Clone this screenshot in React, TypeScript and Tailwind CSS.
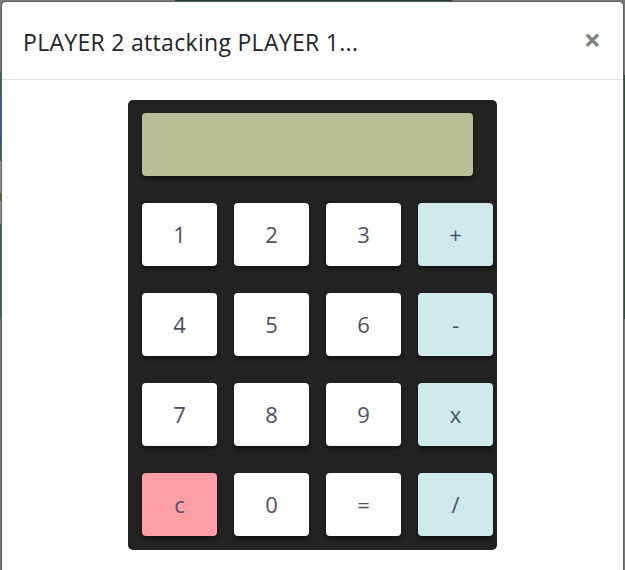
import React from "react";

const keys: { label: string; kind: "num" | "op" | "clear" }[] = [
  { label: "1", kind: "num" },
  { label: "2", kind: "num" },
  { label: "3", kind: "num" },
  { label: "+", kind: "op" },
  { label: "4", kind: "num" },
  { label: "5", kind: "num" },
  { label: "6", kind: "num" },
  { label: "-", kind: "op" },
  { label: "7", kind: "num" },
  { label: "8", kind: "num" },
  { label: "9", kind: "num" },
  { label: "x", kind: "op" },
  { label: "c", kind: "clear" },
  { label: "0", kind: "num" },
  { label: "=", kind: "num" },
  { label: "/", kind: "op" },
];

function Key({ label, kind }: { label: string; kind: "num" | "op" | "clear" }) {
  const bg =
    kind === "op" ? "bg-[#d0e9ea]" : kind === "clear" ? "bg-[#ff9ea6]" : "bg-white";
  return (
    <div
      className={`${bg} h-[63px] w-[75px] rounded-[4px] flex items-center justify-center text-[22px] text-[#4a5165] shadow-[0_3px_4px_rgba(0,0,0,0.45)]`}
    >
      {label}
    </div>
  );
}

export default function App() {
  return (
    <div
      className="w-[625px] h-[570px] overflow-hidden bg-[#7a7a7a] flex flex-col"
      style={{ fontFamily: '"Open Sans", "Noto Sans", sans-serif' }}
    >
      {/* top strip of page behind the backdrop */}
      <div className="h-px flex shrink-0">
        <div className="w-[175px]" />
        <div className="w-[277px] bg-[#17462b]" />
        <div className="flex-1" />
      </div>
      <div className="flex flex-1 min-h-0">
        {/* left strip */}
        <div className="w-px flex flex-col shrink-0">
          <div className="h-[71px]" />
          <div className="h-[22px] bg-[#2b6b45]" />
          <div className="h-[49px] bg-[#1c57b8]" />
          <div className="h-[18px] bg-[#2b6b45]" />
          <div className="h-[32px] bg-[#9d9580]" />
          <div className="h-[8px] bg-[#7a5a14]" />
          <div className="h-[23px] bg-[#9d9580]" />
          <div className="h-[95px] bg-[#2b6b45]" />
          <div className="flex-1" />
        </div>
        {/* modal */}
        <div className="w-[623px] shrink-0 bg-white rounded-t-[5px] border border-[#5f5f5f] border-b-0 flex flex-col">
          <div className="h-[78px] shrink-0 flex items-center justify-between pl-[21px] pr-[22px] border-b border-[#dee2e6]">
            <div className="text-[23px] leading-[30px] text-[#212529] pt-[2px] tracking-[0.3px]">
              PLAYER 2 attacking PLAYER 1...
            </div>
            <div className="text-[30px] font-bold leading-none text-[#808080] pb-[1px]">×</div>
          </div>
          <div className="flex justify-center pt-[20px]">
            <div className="w-[369px] bg-[#222222] rounded-[5px] pt-[13px] pl-[14px] pr-[4px] pb-[14px] flex flex-col gap-[27px]">
              <div className="h-[63px] w-[331px] bg-[#bbbd97] rounded-[4px] shadow-[0_3px_4px_rgba(0,0,0,0.45)]" />
              <div className="grid grid-cols-[repeat(4,75px)] gap-x-[17px] gap-y-[27px]">
                {keys.map((k) => (
                  <Key key={k.label} label={k.label} kind={k.kind} />
                ))}
              </div>
            </div>
          </div>
        </div>
        {/* right strip */}
        <div className="w-px flex flex-col shrink-0">
          <div className="h-[74px]" />
          <div className="h-[244px] bg-[#1f5a37]" />
          <div className="flex-1" />
        </div>
      </div>
    </div>
  );
}
